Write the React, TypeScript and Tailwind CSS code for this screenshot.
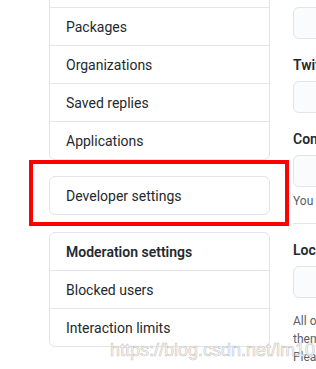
const sidebarTop = ['Repositories', 'Packages', 'Organizations', 'Saved replies', 'Applications'];
const moderation = ['Blocked users', 'Interaction limits'];

function MenuItem({ label, bold = false, first = false }: { label: string; bold?: boolean; first?: boolean }) {
  return (
    <div
      className={`px-4 pt-[9px] pb-[7px] leading-[21px] whitespace-nowrap ${first ? '' : 'border-t border-[#e1e4e8]'} ${
        bold ? 'font-semibold' : ''
      }`}
    >
      {label}
    </div>
  );
}

function Field({ label, children }: { label: string; children?: React.ReactNode }) {
  return (
    <div className="mt-4">
      <div className="font-semibold leading-5 whitespace-nowrap">{label}</div>
      <div className="mt-[6px] h-8 w-[400px] rounded-md border border-[#e1e4e8] bg-[#fafbfc]" />
      {children}
    </div>
  );
}

export default function App() {
  return (
    <div className="relative h-[369px] w-[316px] overflow-hidden bg-white font-['Roboto',sans-serif] text-[14px] text-[#24292e]">
      <div className="flex gap-[23px] pl-[49px]">
        {/* ── Sidebar ─────────────────────────────────────── */}
        <div className="flex w-[221px] shrink-0 flex-col gap-4">
          <nav className="-mt-[31px] rounded-md border border-[#e1e4e8]">
            {sidebarTop.map((item, i) => (
              <MenuItem key={item} label={item} first={i === 0} />
            ))}
          </nav>
          <nav className="rounded-md border border-[#e1e4e8]">
            <MenuItem label="Developer settings" first />
          </nav>
          <nav className="mt-px rounded-md border border-[#e1e4e8]">
            <MenuItem label="Moderation settings" bold first />
            {moderation.map((item) => (
              <MenuItem key={item} label={item} />
            ))}
          </nav>
        </div>

        {/* ── Profile form ────────────────────────────────── */}
        <div className="w-[400px] shrink-0 pt-[7px]">
          <div className="h-8 w-[400px] rounded-md border border-[#e1e4e8] bg-[#fafbfc]" />
          <Field label="Twitter username" />
          <Field label="Company">
            <p className="mt-[5px] text-[12px] leading-[18px] whitespace-nowrap text-[#586069]">
              You can @mention your company's GitHub organization to link it.
            </p>
          </Field>
          <div className="mt-[13px] border-t border-[#e1e4e8]" />
          <Field label="Location" />
          <p className="mt-[14px] text-[12px] leading-[18px] whitespace-nowrap text-[#586069]">
            All of the fields on this page are optional and can be deleted at any time, and by filling
            <br />
            them out, you're giving us consent to share this data wherever your user profile appears.
            <br />
            Please see our privacy statement to learn more about how we use this information.
          </p>
        </div>
      </div>

      {/* annotation + watermark on top of the screenshot */}
      <div className="absolute left-[29px] top-[160px] h-[66px] w-[260px] border-4 border-[#ff0000]" />
      <div className="absolute left-[110px] top-[339px] font-['Liberation_Sans',sans-serif] text-[18px] leading-[22px] text-white [-webkit-text-stroke:0.6px_#c4c4c4]">
        https://blog.csdn.net/lm1022
      </div>
    </div>
  );
}
